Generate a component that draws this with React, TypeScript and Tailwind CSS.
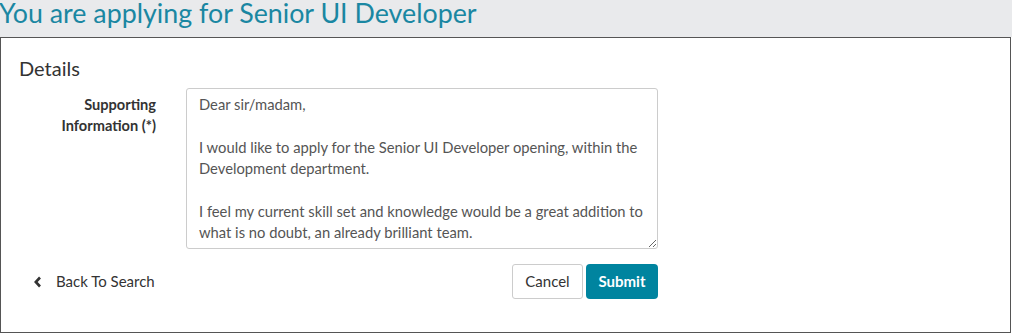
import React from "react";

const text = `Dear sir/madam,

I would like to apply for the Senior UI Developer opening, within the Development department.

I feel my current skill set and knowledge would be a great addition to what is no doubt, an already brilliant team.`;

export default function App() {
  return (
    <div className="w-[1012px] h-[333px] bg-white font-['Lato','Open_Sans',sans-serif] text-[#333]">
      <div className="h-[37px] bg-[#e9eaec] flex items-start">
        <h1 className="text-[26.8px] leading-[33px] -mt-[3px] text-[#1a87a2] ml-[-1px]">
          You are applying for Senior UI Developer
        </h1>
      </div>
      <div className="w-[1011px] h-[296px] border border-[#555] px-[18px] pt-[17px]">
        <h2 className="text-[20px] leading-[26px] text-[#333]">Details</h2>
        <div className="flex mt-[7px]">
          <label className="w-[137px] text-right font-bold text-[14.6px] leading-[21px] pt-[6px] text-[#333]">
            Supporting
            <br />
            Information (*)
          </label>
          <textarea
            className="ml-[30px] w-[472px] h-[161px] border border-[#ccc] rounded-[3px] px-[12px] pt-[5px] text-[14.75px] leading-[21.4px] text-[#555] resize-y outline-none"
            defaultValue={text}
          />
        </div>
        <div className="flex items-center mt-[15px]">
          <a className="flex items-center ml-[14px] text-[15px] text-[#333] w-[479px]">
            <svg width="10" height="12" viewBox="0 0 10 12" className="mr-[13px]">
              <path d="M7 1.5 L2.8 6 L7 10.5" fill="none" stroke="#333" strokeWidth="2.6" />
            </svg>
            Back To Search
          </a>
          <button className="h-[35px] w-[71px] border border-[#ccc] rounded-[3px] bg-white text-[15px] text-[#333]">
            Cancel
          </button>
          <button className="ml-[3px] h-[35px] w-[72px] rounded-[4px] bg-[#00849f] text-[15px] font-bold text-white">
            Submit
          </button>
        </div>
      </div>
    </div>
  );
}
